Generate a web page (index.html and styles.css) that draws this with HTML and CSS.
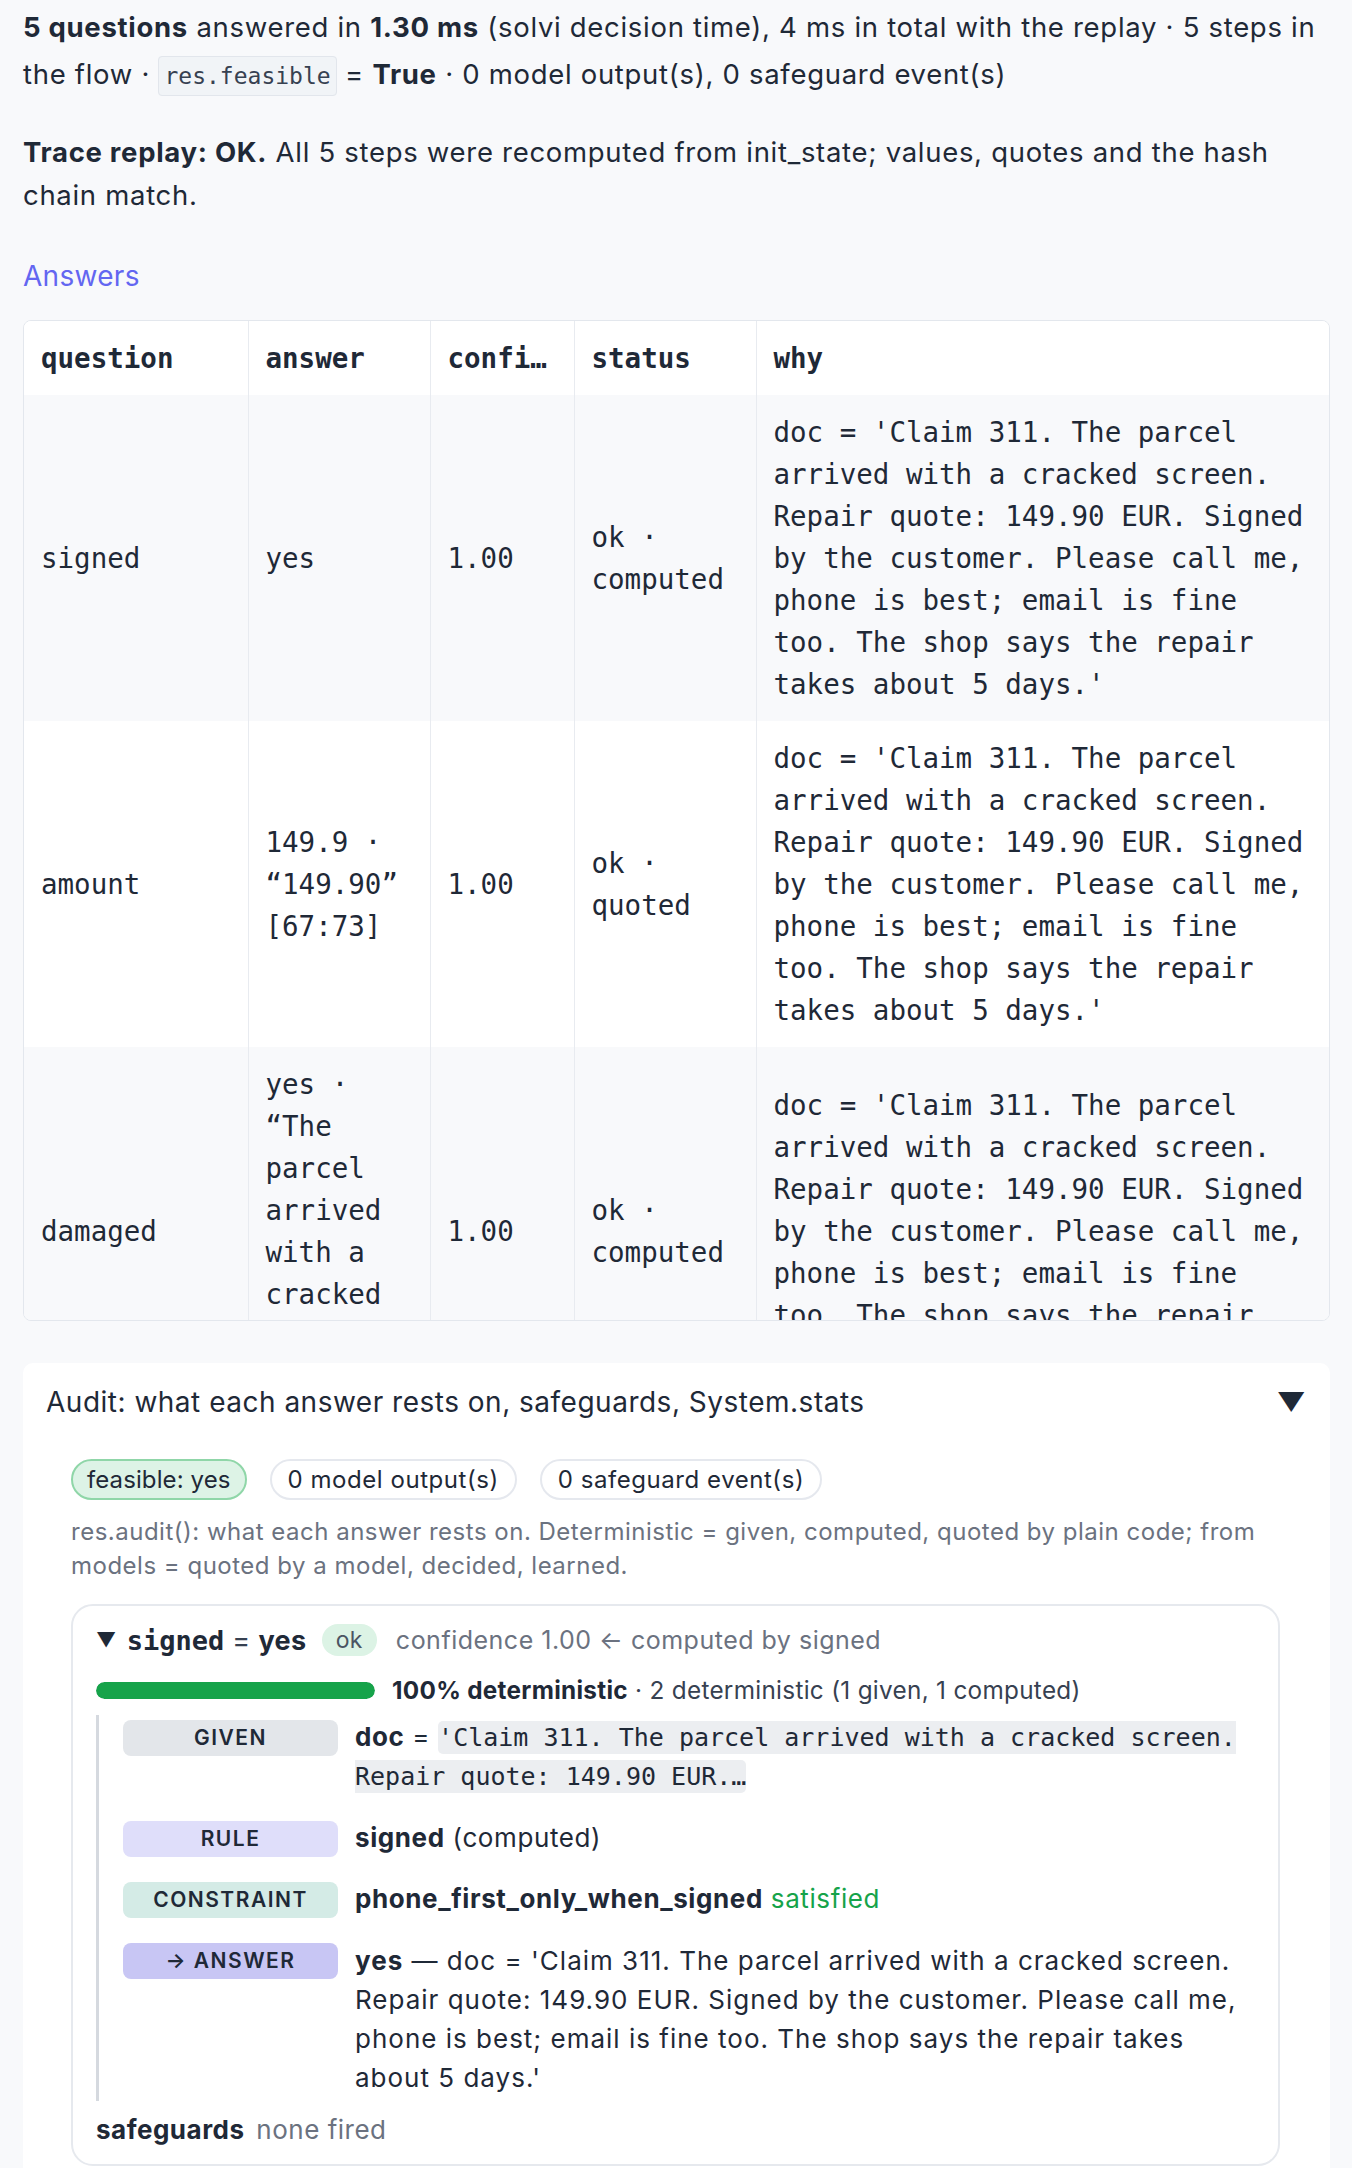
FILE: index.html
```html
<!DOCTYPE html>
<html lang="en">
<head>
<meta charset="utf-8">
<title>Audit</title>
<link rel="stylesheet" href="styles.css">
</head>
<body>
<main class="page">
  <p class="lead"><b>5 questions</b> answered in <b>1.30 ms</b> (solvi decision time), 4 ms in total with the replay · 5 steps in the flow · <code class="inline">res.feasible</code> = <b>True</b> · 0 model output(s), 0 safeguard event(s)</p>
  <p class="replay"><b>Trace replay: OK.</b> All 5 steps were recomputed from init_state; values, quotes and the hash chain match.</p>
  <h3 class="answers-title">Answers</h3>
  <div class="grid-wrap">
    <table class="grid">
      <colgroup><col class="c-q"><col class="c-a"><col class="c-c"><col class="c-s"><col class="c-w"></colgroup>
      <thead>
        <tr><th>question</th><th>answer</th><th>confidence</th><th>status</th><th>why</th></tr>
      </thead>
      <tbody>
        <tr class="shade">
          <td>signed</td>
          <td>yes</td>
          <td>1.00</td>
          <td>ok · computed</td>
          <td>doc = 'Claim 311. The parcel arrived with a cracked screen. Repair quote: 149.90 EUR. Signed by the customer. Please call me, phone is best; email is fine too. The shop says the repair takes about 5 days.'</td>
        </tr>
        <tr>
          <td>amount</td>
          <td>149.9 · “149.90” [67:73]</td>
          <td>1.00</td>
          <td>ok · quoted</td>
          <td>doc = 'Claim 311. The parcel arrived with a cracked screen. Repair quote: 149.90 EUR. Signed by the customer. Please call me, phone is best; email is fine too. The shop says the repair takes about 5 days.'</td>
        </tr>
        <tr class="shade">
          <td>damaged</td>
          <td>yes · “The parcel arrived with a cracked screen” [12:51]</td>
          <td>1.00</td>
          <td>ok · computed</td>
          <td>doc = 'Claim 311. The parcel arrived with a cracked screen. Repair quote: 149.90 EUR. Signed by the customer. Please call me, phone is best; email is fine too. The shop says the repair takes about 5 days.'</td>
        </tr>
      </tbody>
    </table>
  </div>

  <section class="audit">
    <div class="audit-head">
      <span class="audit-title">Audit: what each answer rests on, safeguards, System.stats</span>
      <span class="caret">▼</span>
    </div>
    <div class="audit-body">
      <div class="pills">
        <span class="pill pill-ok">feasible: yes</span>
        <span class="pill">0 model output(s)</span>
        <span class="pill">0 safeguard event(s)</span>
      </div>
      <p class="audit-note">res.audit(): what each answer rests on. Deterministic = given, computed, quoted by plain code; from models = quoted by a model, decided, learned.</p>
      <div class="card">
        <div class="card-head">
          <span class="tri">▼</span><code class="name">signed</code><span class="eq">=</span><b>yes</b><span class="ok">ok</span><span class="conf">confidence 1.00 ← computed by signed</span>
        </div>
        <div class="det">
          <span class="bar"><span class="fill" style="width:100%"></span></span>
          <span class="det-text"><b>100% deterministic</b> · 2 deterministic (1 given, 1 computed)</span>
        </div>
        <div class="steps">
          <div class="step">
            <span class="tag tag-given">GIVEN</span>
            <div class="val"><b>doc</b> = <code class="lit">'Claim 311. The parcel arrived with a cracked screen. Repair quote: 149.90 EUR.…</code></div>
          </div>
          <div class="step">
            <span class="tag tag-rule">RULE</span>
            <div class="val"><b>signed</b> (computed)</div>
          </div>
          <div class="step">
            <span class="tag tag-constraint">CONSTRAINT</span>
            <div class="val"><b>phone_first_only_when_signed</b> <span class="good">satisfied</span></div>
          </div>
          <div class="step step-answer">
            <span class="tag tag-answer">→ ANSWER</span>
            <div class="val"><b>yes</b> — doc = 'Claim 311. The parcel arrived with a cracked screen. Repair quote: 149.90 EUR. Signed by the customer. Please call me, phone is best; email is fine too. The shop says the repair takes about 5 days.'</div>
          </div>
        </div>
        <div class="safeguards"><b>safeguards</b> <span class="muted">none fired</span></div>
      </div>
    </div>
  </section>
</main>
</body>
</html>
```

FILE: styles.css
```css
html, body {
  margin: 0;
  padding: 0;
  background: #f8f9fb;
}

body {
  font-family: "Inter", "Noto Sans", "Liberation Sans", sans-serif;
  color: #1f2937;
}

.page {
  padding: 4px 22px 0 23px;
}

.lead {
  margin: 0;
  font-size: 27.5px;
  letter-spacing: 0.7px;
  line-height: 47px;
}

.lead b, .replay b {
  font-weight: 700;
}

code {
  font-family: "DejaVu Sans Mono", "Liberation Mono", monospace;
  letter-spacing: 0;
}

.inline {
  font-size: 23px;
  background: #f1f4f7;
  border: 1px solid #e2e6ec;
  border-radius: 4px;
  padding: 6px 5px;
  color: #374151;
}

.replay {
  margin: 31px 0 0;
  font-size: 27.5px;
  letter-spacing: 0.7px;
  line-height: 43px;
}

.answers-title {
  margin: 37px 0 0;
  font-size: 28px;
  letter-spacing: 0.3px;
  line-height: 44px;
  font-weight: 400;
  color: #6366f1;
}

.grid-wrap {
  margin-top: 22px;
  height: 999px;
  overflow: hidden;
  border: 1px solid #e3e7ed;
  border-radius: 8px;
  background: #fff;
}

.grid {
  width: 1306px;
  table-layout: fixed;
  border-collapse: collapse;
  font-family: "DejaVu Sans Mono", "Liberation Mono", monospace;
  font-size: 27.5px;
  line-height: 42px;
  color: #1f2937;
}

.c-q { width: 224px; }
.c-a { width: 182px; }
.c-c { width: 144px; }
.c-s { width: 182px; }
.c-w { width: 574px; }

.grid th {
  text-align: left;
  font-weight: 700;
  padding: 16px 17px;
  background: #fff;
  border-right: 1px solid #e8ebf0;
  white-space: nowrap;
  overflow: hidden;
  text-overflow: ellipsis;
}

.grid td {
  padding: 16px 17px;
  vertical-align: middle;
  border-right: 1px solid #e8ebf0;
  background: #fff;
}

.grid th:last-child, .grid td:last-child {
  border-right: none;
}

.grid tr.shade td {
  background: #f8f9fb;
}

/* audit */
.audit {
  margin-top: 42px;
  background: #fff;
  border-radius: 10px;
  padding-bottom: 40px;
}

.audit-head {
  display: flex;
  align-items: center;
  justify-content: space-between;
  padding: 17px 25px 0 23px;
  font-size: 28px;
  letter-spacing: 0.5px;
  line-height: 44px;
}

.caret {
  font-size: 26px;
  color: #1f2937;
  transform: scaleX(1.1);
}

.audit-body {
  padding: 35px 50px 0 48px;
}

.pills {
  display: flex;
  gap: 23px;
}

.pill {
  display: inline-flex;
  align-items: center;
  height: 41px;
  box-sizing: border-box;
  padding: 0 16px;
  border: 2px solid #e5e8ee;
  border-radius: 999px;
  font-size: 24px;
  letter-spacing: 0.55px;
  color: #1f2937;
  background: #fff;
}

.pill-ok {
  background: #ddf3e6;
  border-color: #8fd6a8;
  padding: 0 14px;
  letter-spacing: 0.1px;
}

.audit-note {
  margin: 15px 0 0;
  font-size: 24px;
  letter-spacing: 0.5px;
  line-height: 34px;
  color: #6b7280;
}

.card {
  margin-top: 21px;
  border: 2px solid #e6e9ee;
  border-radius: 22px;
  padding: 15px 30px 16px 23px;
}

.card-head {
  display: flex;
  align-items: center;
  height: 38px;
  font-size: 27px;
  letter-spacing: 0.4px;
}

.tri {
  font-size: 20px;
  margin-right: 10px;
}

.name {
  font-size: 27px;
  font-weight: 700;
  color: #1f2937;
}

.eq {
  margin: 0 8px;
  color: #374151;
}

.card-head b {
  font-weight: 700;
}

.ok {
  margin-left: 15px;
  background: #dcf3e5;
  border-radius: 999px;
  height: 32px;
  line-height: 32px;
  padding: 0 14px;
  font-size: 23px;
  color: #4b5563;
}

.conf {
  margin-left: 19px;
  font-size: 25px;
  letter-spacing: 0.5px;
  color: #6b7280;
}

.det {
  display: flex;
  align-items: center;
  margin-top: 13px;
  height: 36px;
  font-size: 24.3px;
  letter-spacing: 0.3px;
  color: #374151;
}

.bar {
  display: block;
  width: 279px;
  height: 17px;
  border-radius: 999px;
  background: #e5e7eb;
  overflow: hidden;
  margin-right: 17px;
}

.fill {
  display: block;
  height: 100%;
  background: #16a34a;
  border-radius: 999px;
}

.det-text b {
  color: #1f2937;
}

.steps {
  margin-top: 7px;
  border-left: 3px solid #d5d9df;
  padding: 3px 0 4px 24px;
  display: flex;
  flex-direction: column;
  gap: 23px;
}

.step {
  display: flex;
  align-items: flex-start;
  gap: 17px;
}

.tag {
  flex: 0 0 215px;
  height: 36px;
  line-height: 36px;
  margin-top: 2px;
  border-radius: 8px;
  text-align: center;
  font-size: 21px;
  font-weight: 600;
  letter-spacing: 1.5px;
  color: #1f2937;
}

.tag-given { background: #e3e6ea; }
.tag-rule { background: #dfdefa; }
.tag-constraint { background: #d4ebe6; }
.tag-answer { background: #c8c6f4; }

.val {
  flex: 1;
  font-size: 26px;
  letter-spacing: 0.6px;
  line-height: 38px;
  color: #1f2937;
}

.step-answer .val {
  line-height: 39px;
  letter-spacing: 1px;
}

.val b {
  font-weight: 700;
}

.lit {
  font-size: 25px;
  background: #eceef1;
  border-radius: 5px;
  padding: 2px 0;
  color: #1f2937;
}

.good {
  color: #16a34a;
}

.safeguards {
  margin-top: 11px;
  font-size: 26px;
  letter-spacing: 0.5px;
  line-height: 36px;
}

.muted {
  color: #6b7280;
  margin-left: 4px;
}
```
